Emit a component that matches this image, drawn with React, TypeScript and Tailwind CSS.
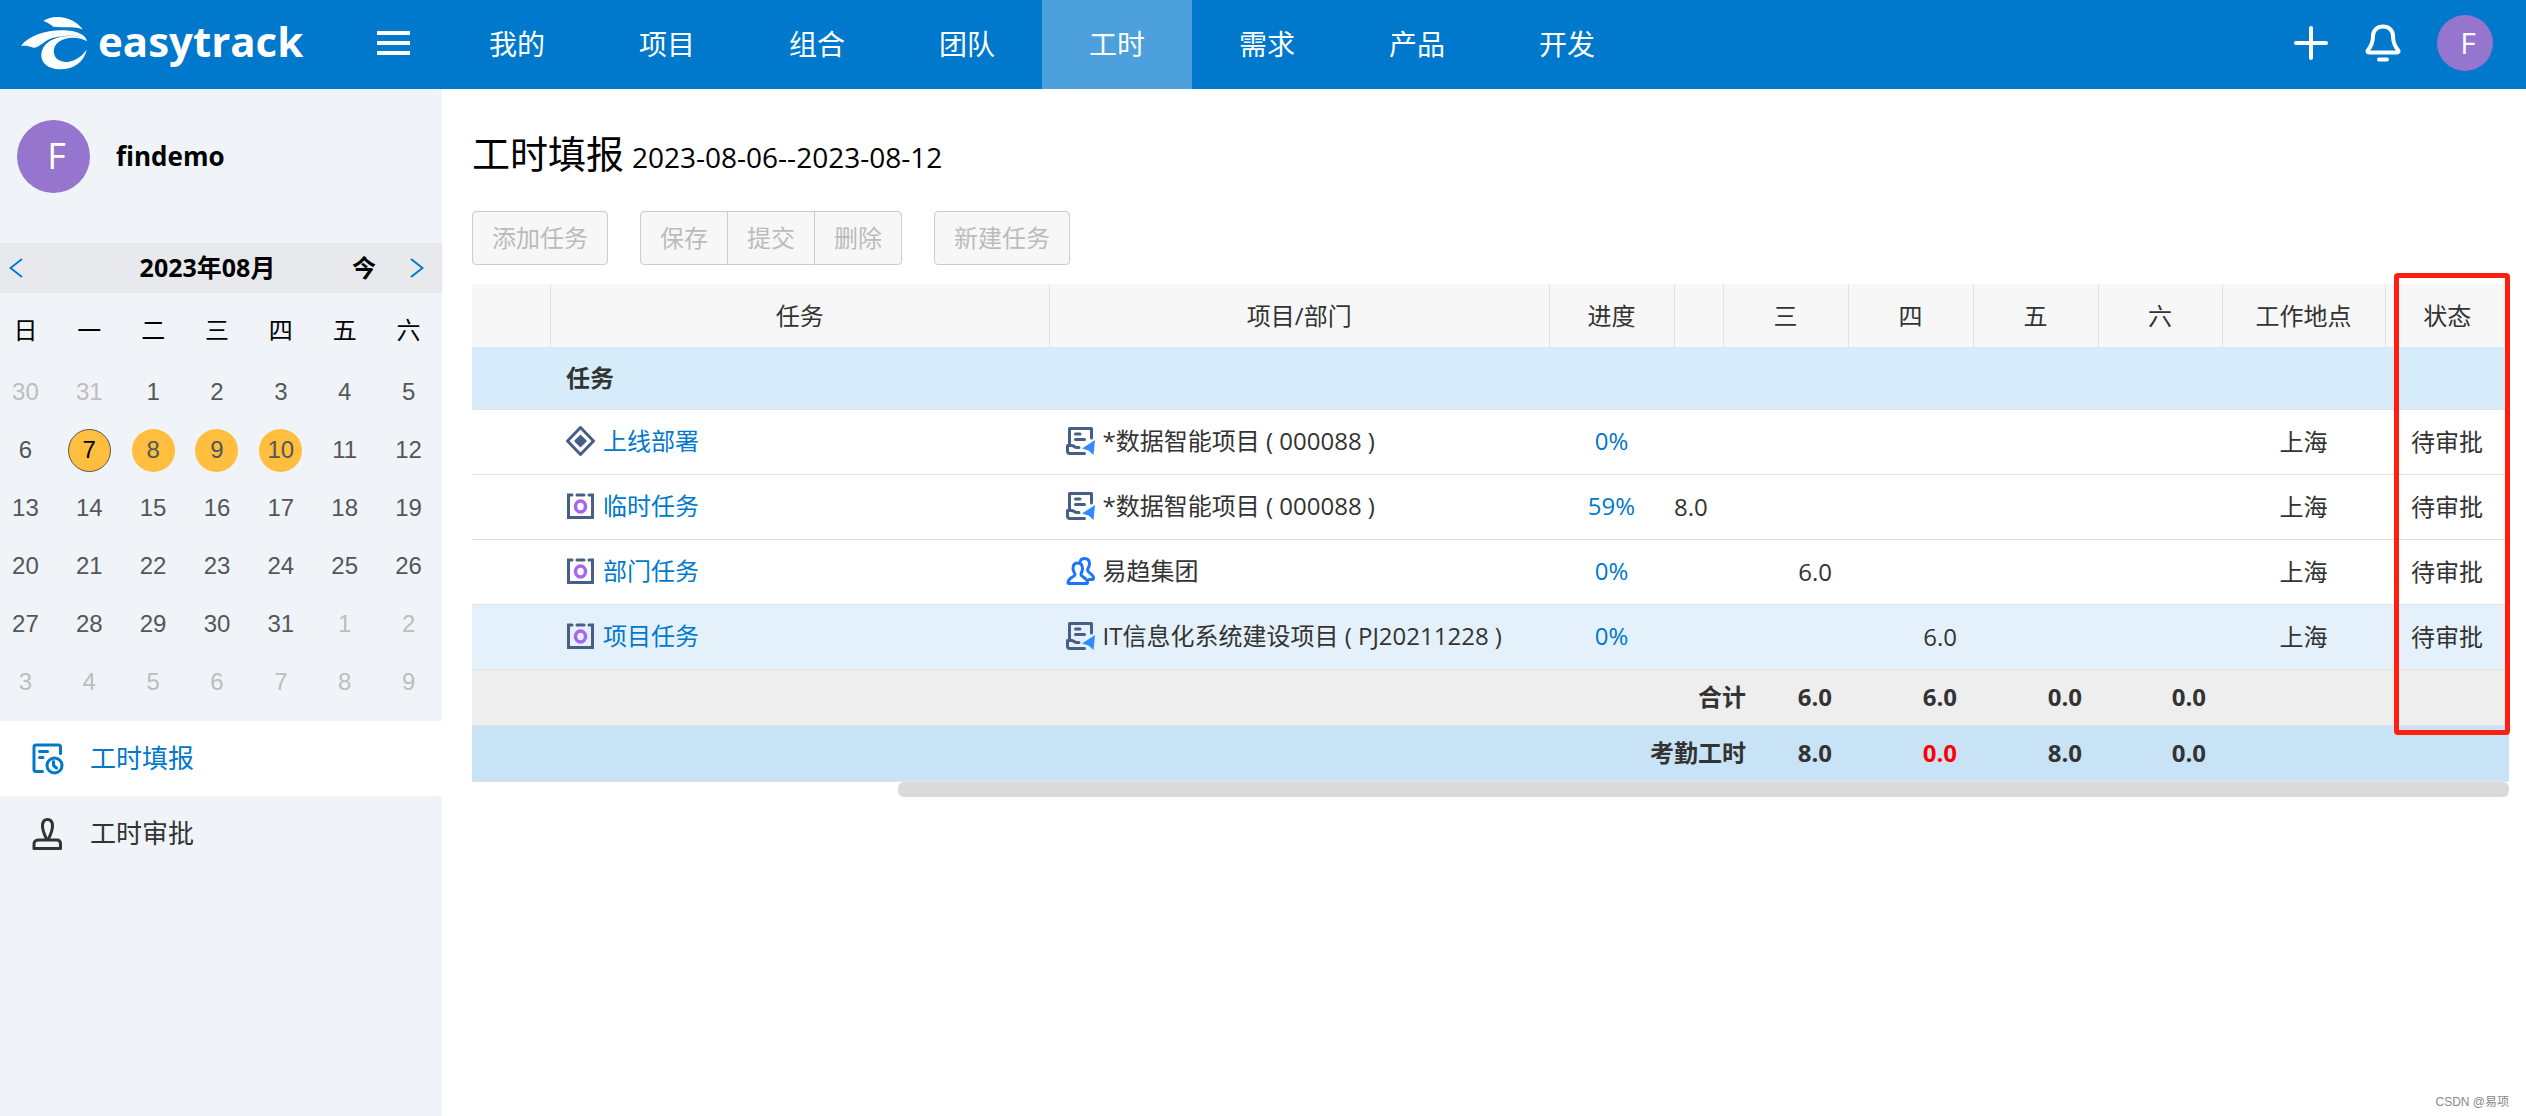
import { Fragment } from 'react';

const navItems = ['我的', '项目', '组合', '团队', '工时', '需求', '产品', '开发'];

const weekdays = ['日', '一', '二', '三', '四', '五', '六'];

// July 30 .. September 9
const days = Array.from({ length: 42 }, (_, i) => {
  const date = new Date(2023, 6, 30 + i);
  return { key: i, day: date.getDate(), current: date.getMonth() === 7 };
});

const filledDays = [7, 8, 9, 10];
const selectedDay = 7;

interface TaskRow {
  name: string;
  icon: 'milestone' | 'task';
  project: string;
  projectIcon: 'doc' | 'group';
  progress: string;
  hours: string[];
  place: string;
  status: string;
  active?: boolean;
}

const rows: TaskRow[] = [
  { name: '上线部署', icon: 'milestone', project: '*数据智能项目 ( 000088 )', projectIcon: 'doc', progress: '0%', hours: ['', '', '', '', ''], place: '上海', status: '待审批' },
  { name: '临时任务', icon: 'task', project: '*数据智能项目 ( 000088 )', projectIcon: 'doc', progress: '59%', hours: ['8.0', '', '', '', ''], place: '上海', status: '待审批' },
  { name: '部门任务', icon: 'task', project: '易趋集团', projectIcon: 'group', progress: '0%', hours: ['', '6.0', '', '', ''], place: '上海', status: '待审批' },
  { name: '项目任务', icon: 'task', project: 'IT信息化系统建设项目 ( PJ20211228 )', projectIcon: 'doc', progress: '0%', hours: ['', '', '6.0', '', ''], place: '上海', status: '待审批', active: true },
];

const totals = [
  { label: '合计', values: ['6.0', '6.0', '0.0', '0.0'], className: 'bg-[#eeeeee]' },
  { label: '考勤工时', values: ['8.0', '0.0', '8.0', '0.0'], warn: 1, className: 'bg-[#c8e3f6]' },
];

function Logo() {
  return (
    <a href="#" className="flex items-center gap-2.5 text-white">
      <svg viewBox="60 44 205 164" className="h-[54px] w-[68px]" fill="currentColor" aria-hidden="true">
        <path d="M130 59C150 44 180 44 205 52C225 59 240 70 250 85C225 74 190 80 160 77C152 69 142 63 130 59Z" />
        <path d="M62 135C85 102 140 86 190 87C230 88 258 98 263 121C250 108 225 102 198 105C160 108 150 112 130 126C115 137 108 141 98 140C85 134 75 134 62 135Z" />
        <path d="M263 121C240 108 215 108 195 114C172 121 161 136 162 154C164 176 185 186 208 183C230 179 248 166 262 146C254 184 222 207 180 206C145 205 122 186 124 160C126 132 150 114 185 107C215 102 250 104 263 121Z" />
      </svg>
      <span className="pb-1 text-[42px] leading-[54px] font-bold">easytrack</span>
    </a>
  );
}

function Avatar({ className }: { className: string }) {
  return (
    <span className={`flex items-center justify-center rounded-full bg-[#9575cd] pl-1.5 text-white ${className}`}>F</span>
  );
}

function BellIcon() {
  return (
    <svg viewBox="0 0 36 38" className="h-[38px] w-9" fill="none" stroke="currentColor" strokeWidth="4" strokeLinecap="round" strokeLinejoin="round" aria-hidden="true">
      <path d="M18 2.5C11.5 2.5 8 7 8 12C8 19 6.500 22 3 26C2 27.500 2.500 28.500 4 28.500H32C33.500 28.500 34 27.500 33 26C29.500 22 28 19 28 12C28 7 24.500 2.500 18 2.500Z" />
      <path d="M14 35.500H22" />
    </svg>
  );
}

function FillIcon() {
  return (
    <svg viewBox="0 0 32 32" className="size-8" fill="none" stroke="currentColor" strokeWidth="3" strokeLinecap="round" strokeLinejoin="round" aria-hidden="true">
      <path d="M28.500 10.500V4Q28.500 2 26.500 2H4Q2 2 2 4V26.500Q2 28.500 4 28.500H10.500" />
      <path d="M7.500 8.500H15.500M7.500 14.500H11" />
      <circle cx="22.500" cy="22.500" r="7.500" />
      <path d="M21.500 18.500V22.500L24.500 25" />
    </svg>
  );
}

function StampIcon() {
  return (
    <svg viewBox="0 0 32 32" className="size-8" fill="none" stroke="currentColor" strokeWidth="3" strokeLinecap="round" strokeLinejoin="round" aria-hidden="true">
      <path d="M15.500 1.500C12 1.500 10.500 4.500 10.500 8C10.500 13 12.500 16.500 14.500 21H16.500C18.500 16.500 20.500 13 20.500 8C20.500 4.500 19 1.500 15.500 1.500Z" />
      <path d="M6 22H25C27.500 22 28.500 24 28.500 26V30.500H2V26C2 24 3.500 22 6 22Z" />
    </svg>
  );
}

function TaskIcon({ type }: { type: TaskRow['icon'] }) {
  if (type === 'milestone') {
    return (
      <svg viewBox="0 0 29 30" className="h-[30px] w-[29px]" aria-hidden="true">
        <path d="M14.500 1.500L27.500 15L14.500 28.500L1.500 15Z" fill="none" stroke="#475f86" strokeWidth="3" strokeLinejoin="round" />
        <path d="M14.500 9.500L20 15L14.500 20.500L9 15Z" fill="#475f86" stroke="#475f86" strokeWidth="1.500" strokeLinejoin="round" />
      </svg>
    );
  }
  return (
    <svg viewBox="0 0 29 28" className="h-7 w-[29px]" fill="none" stroke="#475f86" strokeWidth="3" strokeLinecap="round" aria-hidden="true">
      <path d="M6 3H2.500V25.500H26.500V3H23M11 3H18" />
      <ellipse cx="14.500" cy="14.500" rx="5" ry="5.500" stroke="#a766f2" strokeWidth="3.500" />
    </svg>
  );
}

function ProjectIcon({ type }: { type: TaskRow['projectIcon'] }) {
  if (type === 'group') {
    return (
      <svg viewBox="0 0 29 28" className="h-7 w-[29px]" fill="none" stroke="#1a75ff" strokeWidth="3" strokeLinecap="round" strokeLinejoin="round" aria-hidden="true">
        <path d="M11.500 6C8 6 7 8.500 7 11.500C7 14.500 9 15.500 9 17.500C9 20 2 20.500 2 25.500Q2 26.500 3 26.500H20.500Q21.500 26.500 21.500 25.500C21.500 21 15 20 15 17.500C15 15.500 16.500 14.500 16.500 11.500C16.500 8.500 15 6 11.500 6Z" />
        <path d="M14 5C14.500 2.500 16 1.500 18.500 1.500C22 1.500 23.500 4 23.500 7C23.500 10 21.500 11 21.500 13C21.500 16 27.500 17 27.500 21Q27.500 22.500 26 22.500H23" />
      </svg>
    );
  }
  return (
    <svg viewBox="0 0 29 28" className="h-7 w-[29px]" fill="none" stroke="#475f86" strokeWidth="3" strokeLinecap="round" strokeLinejoin="round" aria-hidden="true">
      <path d="M3.500 18V1.500H25.500V11" />
      <path d="M9.500 7H14M9.500 12.500H18.500" />
      <path d="M13 20.500H10.500C8.500 20.500 8 18.500 5.500 18.500H1.500V24Q1.500 26.500 4 26.500H18.500" />
      <path d="M29 13L27.500 28L22.500 23.500L16 21.500Z" fill="#2f8bff" stroke="none" />
    </svg>
  );
}

function Chevron({ flip }: { flip?: boolean }) {
  return (
    <svg viewBox="0 0 14 20" className="h-5 w-3.5" fill="none" stroke="#0078cc" strokeWidth="2" aria-hidden="true">
      <path d={flip ? 'M1 1L12.500 10L1 19' : 'M13 1L1.500 10L13 19'} />
    </svg>
  );
}

function Calendar() {
  return (
    <section>
      <div className="flex h-[50px] items-center bg-[#e8e9ed] pr-[18px] pl-[9px]">
        <button type="button" aria-label="上个月"><Chevron /></button>
        <div className="flex-1 pl-[40px] text-center text-[25px] font-bold">2023年08月</div>
        <button type="button" className="mr-[34px] text-2xl font-bold">今</button>
        <button type="button" aria-label="下个月"><Chevron flip /></button>
      </div>
      <div className="grid grid-cols-7 gap-x-[13px] pt-2 pr-2 text-center">
        {weekdays.map((d) => (
          <div key={d} className="h-[62px] text-2xl leading-[58px]">{d}</div>
        ))}
        {days.map(({ key, day, current }) => {
          const filled = current && filledDays.includes(day);
          const selected = current && day === selectedDay;
          return (
            <div key={key} className="flex h-[58px] items-center justify-center font-['Liberation_Sans',sans-serif]">
              <button
                type="button"
                className={`size-[43px] rounded-full text-2xl ${filled ? 'bg-[#ffbe3d]' : ''} ${
                  selected ? 'border border-[#555] text-black' : current ? 'text-[#54565a]' : 'text-[#bdbdbd]'
                }`}
              >
                {day}
              </button>
            </div>
          );
        })}
      </div>
    </section>
  );
}

function Sidebar() {
  return (
    <aside className="w-[442px] shrink-0 bg-[#f0f4f8] text-black">
      <div className="flex h-[154px] items-center gap-[26px] pb-5 pl-[17px]">
        <Avatar className="size-[73px] text-4xl" />
        <span className="text-[26px] font-bold">findemo</span>
      </div>
      <Calendar />
      <nav className="mt-2.5 text-[26px]">
        <a href="#fill" className="flex h-[75px] items-center gap-[26px] bg-white pl-8 text-[#0078cc]">
          <FillIcon />
          工时填报
        </a>
        <a href="#approve" className="flex h-[75px] items-center gap-[26px] pl-8 text-[#333]">
          <StampIcon />
          工时审批
        </a>
      </nav>
    </aside>
  );
}

const buttonClass = 'h-[54px] border border-[#ccc] bg-[#f7f7f7] px-[19px] text-2xl text-[#bbb]';

function Toolbar() {
  return (
    <div className="flex gap-8">
      <button type="button" className={`${buttonClass} rounded`}>添加任务</button>
      <div className="flex">
        <button type="button" className={`${buttonClass} rounded-l`}>保存</button>
        <button type="button" className={`${buttonClass} -ml-px`}>提交</button>
        <button type="button" className={`${buttonClass} -ml-px rounded-r`}>删除</button>
      </div>
      <button type="button" className={`${buttonClass} rounded`}>新建任务</button>
    </div>
  );
}

function TimesheetTable() {
  return (
    <div className="relative mt-[19px]">
      <table className="w-full table-fixed text-2xl text-[#333]">
        <colgroup>
          <col className="w-[78px]" />
          <col />
          <col />
          <col className="w-[125px]" />
          <col className="w-[49px]" />
          {/* Wednesday takes two columns, the footer labels reach into the first */}
          <col className="w-[39px]" />
          <col className="w-[86px]" />
          <col className="w-[125px]" />
          <col className="w-[125px]" />
          <col className="w-[124px]" />
          <col className="w-[163px]" />
          <col className="w-[124px]" />
        </colgroup>
        <thead>
          <tr className="h-[63px] bg-[#f7f7f7] *:border-r *:border-[#e2e2e2] *:font-normal *:last:border-r-0">
            <th />
            <th>任务</th>
            <th>项目/部门</th>
            <th>进度</th>
            <th />
            <th colSpan={2}>三</th>
            <th>四</th>
            <th>五</th>
            <th>六</th>
            <th>工作地点</th>
            <th>状态</th>
          </tr>
        </thead>
        <tbody>
          <tr className="h-[62px] border-b border-[#e2e2e2] bg-[#d7ecfa]">
            <td />
            <td colSpan={11} className="pl-4 font-bold">任务</td>
          </tr>
          {rows.map((row) => (
            <tr key={row.name} className={`h-[65px] border-b border-[#e2e2e2] ${row.active ? 'bg-[#e4f1fa]' : ''}`}>
              <td />
              <td className="pb-0.5 pl-4">
                <a href="#task" className="flex items-center gap-2 text-[#0078cc]">
                  <TaskIcon type={row.icon} />
                  {row.name}
                </a>
              </td>
              <td className="pb-0.5 pl-4">
                <div className="flex items-center gap-2 whitespace-nowrap">
                  <ProjectIcon type={row.projectIcon} />
                  {row.project}
                </div>
              </td>
              <td className="pb-0.5 text-center">
                <a href="#progress" className="text-[#0078cc]">{row.progress}</a>
              </td>
              {row.hours.map((h, i) => (
                <td key={i} colSpan={i === 1 ? 2 : 1} className="pr-4 text-right">{h}</td>
              ))}
              <td className="text-center">{row.place}</td>
              <td className="text-center">{row.status}</td>
            </tr>
          ))}
        </tbody>
        <tfoot>
          {totals.map((t) => (
            <tr key={t.label} className={`h-14 border-b border-[#e2e2e2] font-bold ${t.className}`}>
              <th colSpan={6} scope="row" className="pr-4 text-right">{t.label}</th>
              {t.values.map((v, i) => (
                <Fragment key={i}>
                  <td className={`pr-4 text-right ${i === t.warn ? 'text-[#f00]' : ''}`}>{v}</td>
                </Fragment>
              ))}
              <td colSpan={2} />
            </tr>
          ))}
        </tfoot>
      </table>
      <div className="ml-auto h-[15px] w-[79.1%] rounded-md bg-[#dadada]" />
      <div className="pointer-events-none absolute -top-[11px] -right-px bottom-[62px] w-[116px] rounded border-[5px] border-[#ff1f10]" />
    </div>
  );
}

export default function App() {
  return (
    <div className="flex min-h-screen flex-col bg-white font-['Open_Sans','Noto_Sans_CJK_SC',sans-serif] text-black">
      <header className="flex h-[89px] items-center bg-[#0078cc] text-white">
        <div className="flex w-[442px] shrink-0 items-center justify-between pr-8 pb-1 pl-5">
          <Logo />
          <button type="button" aria-label="菜单" className="flex w-[33px] flex-col gap-[6px]">
            <span className="h-1 bg-white" />
            <span className="h-1 bg-white" />
            <span className="h-1 bg-white" />
          </button>
        </div>
        <nav className="flex h-full text-[28px]">
          {navItems.map((item) => (
            <a
              key={item}
              href="#"
              className={`flex w-[150px] items-center justify-center pb-0.5 ${item === '工时' ? 'bg-[#4ca0db]' : ''}`}
            >
              {item}
            </a>
          ))}
        </nav>
        <div className="ml-auto flex items-center gap-9 pr-[33px] pb-1">
          <button type="button" aria-label="新建">
            <svg viewBox="0 0 36 36" className="size-9" stroke="currentColor" strokeWidth="4" strokeLinecap="round" aria-hidden="true">
              <path d="M18 3V33M3 18H33" />
            </svg>
          </button>
          <button type="button" aria-label="通知"><BellIcon /></button>
          <Avatar className="size-14 text-3xl" />
        </div>
      </header>
      <div className="flex flex-1">
        <Sidebar />
        <main className="flex min-w-0 flex-1 flex-col pr-[17px] pl-[30px]">
          <h1 className="flex h-[122px] items-baseline gap-2 pt-[34px] text-[38px] leading-[60px]">
            工时填报
            <span className="text-[28px]">2023-08-06--2023-08-12</span>
          </h1>
          <Toolbar />
          <TimesheetTable />
          <footer className="mt-auto self-end pb-1.5 font-['Liberation_Sans','Noto_Sans_CJK_SC',sans-serif] text-xs text-[#888]">
            CSDN @易项
          </footer>
        </main>
      </div>
    </div>
  );
}
